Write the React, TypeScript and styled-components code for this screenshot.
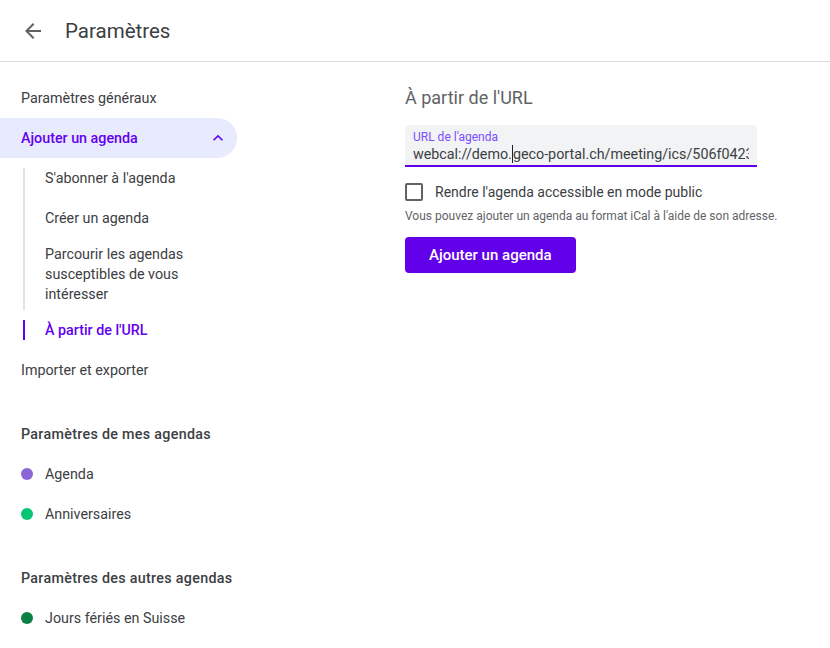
import styled, { createGlobalStyle } from 'styled-components';

const GlobalStyle = createGlobalStyle`
    html, body {
        margin: 0;
        padding: 0;
        background: #ffffff;
        font-family: Roboto, "Noto Sans", Arial, sans-serif;
        color: #3c4043;
    }
`;

const Page = styled.div`
    width: 830px;
    min-height: 648px;
    overflow: hidden;
`;

const Header = styled.header`
    height: 61px;
    border-bottom: 1px solid #dadce0;
    display: flex;
    align-items: center;
    padding-left: 21px;
    gap: 20px;
`;

const Title = styled.h1`
    margin: 0;
    font-size: 20.5px;
    font-weight: 400;
    color: #3c4043;
    line-height: 28px;
`;

const Body = styled.div`
    display: flex;
`;

const Sidebar = styled.nav`
    width: 237px;
    padding-top: 16px;
    display: flex;
    flex-direction: column;
`;

const NavItem = styled.div<{ $active?: boolean }>`
    height: 40px;
    display: flex;
    align-items: center;
    justify-content: space-between;
    padding: 0 9px 0 21px;
    font-size: 14.3px;
    font-weight: ${(p) => (p.$active ? 500 : 400)};
    color: ${(p) => (p.$active ? '#6200ee' : '#3c4043')};
    background: ${(p) => (p.$active ? '#e8eafd' : 'transparent')};
    border-radius: 0 20px 20px 0;
`;

const SubList = styled.div`
    display: flex;
    flex-direction: column;
    margin-left: 23px;
`;

const SubItem = styled.div<{ $active?: boolean }>`
    position: relative;
    min-height: 40px;
    box-sizing: border-box;
    padding: 6px 12px 6px 22px;
    display: flex;
    align-items: center;
    font-size: 14.3px;
    line-height: 20px;
    font-weight: ${(p) => (p.$active ? 500 : 400)};
    color: ${(p) => (p.$active ? '#6200ee' : '#3c4043')};

    &::before {
        content: '';
        position: absolute;
        left: 0;
        width: 2px;
        top: ${(p) => (p.$active ? '10px' : '0')};
        bottom: ${(p) => (p.$active ? '10px' : '0')};
        background: ${(p) => (p.$active ? '#6200ee' : '#e4e3ec')};
    }

    &:first-child::before {
        top: 10px;
    }
`;

const SectionTitle = styled.div`
    margin-top: 24px;
    height: 40px;
    display: flex;
    align-items: center;
    padding-left: 21px;
    font-size: 14.3px;
    font-weight: 500;
    letter-spacing: 0.3px;
    color: #3c4043;
`;

const CalendarRow = styled.div`
    height: 40px;
    display: flex;
    align-items: center;
    gap: 12px;
    padding-left: 21px;
    font-size: 14.3px;
    color: #3c4043;
`;

const Dot = styled.span<{ $color: string }>`
    width: 12px;
    height: 12px;
    border-radius: 50%;
    background: ${(p) => p.$color};
`;

const Content = styled.main`
    flex: 1;
    padding: 24px 0 0 168px;
    display: flex;
    flex-direction: column;
    align-items: flex-start;
`;

const ContentTitle = styled.h2`
    margin: 0;
    font-size: 18px;
    line-height: 24px;
    font-weight: 400;
    color: #5f6368;
`;

const Field = styled.div`
    margin-top: 15px;
    width: 352px;
    box-sizing: border-box;
    background: #f1f3f4;
    border-radius: 4px 4px 0 0;
    border-bottom: 2px solid #6200ee;
    padding: 5px 8px 1px 8px;
`;

const FieldLabel = styled.div`
    font-size: 12px;
    line-height: 14px;
    color: #7c4dff;
`;

const FieldValue = styled.div`
    font-size: 14.3px;
    line-height: 20px;
    color: #3c4043;
    white-space: nowrap;
    overflow: hidden;
`;

const Caret = styled.span`
    display: inline-block;
    width: 1px;
    height: 18px;
    background: #202124;
    vertical-align: -4px;
`;

const CheckRow = styled.label`
    margin-top: 15px;
    display: flex;
    align-items: center;
    gap: 12px;
    font-size: 14px;
    line-height: 20px;
    color: #3c4043;
`;

const CheckBox = styled.span`
    width: 18px;
    height: 18px;
    box-sizing: border-box;
    border: 2px solid #5f6368;
    border-radius: 2px;
`;

const Helper = styled.div`
    margin-top: 6px;
    font-size: 12px;
    line-height: 16px;
    color: #5f6368;
`;

const PrimaryButton = styled.button`
    margin-top: 13px;
    height: 36px;
    padding: 0 24px;
    border: none;
    border-radius: 4px;
    background: #6200ea;
    color: #ffffff;
    font-family: Roboto, "Noto Sans", Arial, sans-serif;
    font-size: 15px;
    font-weight: 500;
    cursor: pointer;
`;

const BackIcon = () => (
    <svg width="24" height="24" viewBox="0 0 24 24" fill="#5f6368">
        <path d="M20 11H7.83l5.59-5.59L12 4l-8 8 8 8 1.41-1.41L7.83 13H20v-2z" />
    </svg>
);

const ChevronUp = () => (
    <svg width="20" height="20" viewBox="0 0 24 24" fill="#6200ee">
        <path d="M12 8l-6 6 1.41 1.41L12 10.83l4.59 4.58L18 14z" />
    </svg>
);

export default function App() {
    return (
        <Page>
            <GlobalStyle />
            <Header>
                <BackIcon />
                <Title>Paramètres</Title>
            </Header>
            <Body>
                <Sidebar>
                    <NavItem>Paramètres généraux</NavItem>
                    <NavItem $active>
                        Ajouter un agenda
                        <ChevronUp />
                    </NavItem>
                    <SubList>
                        <SubItem>S'abonner à l'agenda</SubItem>
                        <SubItem>Créer un agenda</SubItem>
                        <SubItem>Parcourir les agendas susceptibles de vous intéresser</SubItem>
                        <SubItem $active>À partir de l'URL</SubItem>
                    </SubList>
                    <NavItem>Importer et exporter</NavItem>

                    <SectionTitle>Paramètres de mes agendas</SectionTitle>
                    <CalendarRow>
                        <Dot $color="#8b67d3" />
                        Agenda
                    </CalendarRow>
                    <CalendarRow>
                        <Dot $color="#06c675" />
                        Anniversaires
                    </CalendarRow>

                    <SectionTitle>Paramètres des autres agendas</SectionTitle>
                    <CalendarRow>
                        <Dot $color="#0b8043" />
                        Jours fériés en Suisse
                    </CalendarRow>
                </Sidebar>

                <Content>
                    <ContentTitle>À partir de l'URL</ContentTitle>
                    <Field>
                        <FieldLabel>URL de l'agenda</FieldLabel>
                        <FieldValue>
                            webcal://demo.<Caret />geco-portal.ch/meeting/ics/506f04230a7b91c2
                        </FieldValue>
                    </Field>
                    <CheckRow>
                        <CheckBox />
                        Rendre l'agenda accessible en mode public
                    </CheckRow>
                    <Helper>Vous pouvez ajouter un agenda au format iCal à l'aide de son adresse.</Helper>
                    <PrimaryButton>Ajouter un agenda</PrimaryButton>
                </Content>
            </Body>
        </Page>
    );
}
